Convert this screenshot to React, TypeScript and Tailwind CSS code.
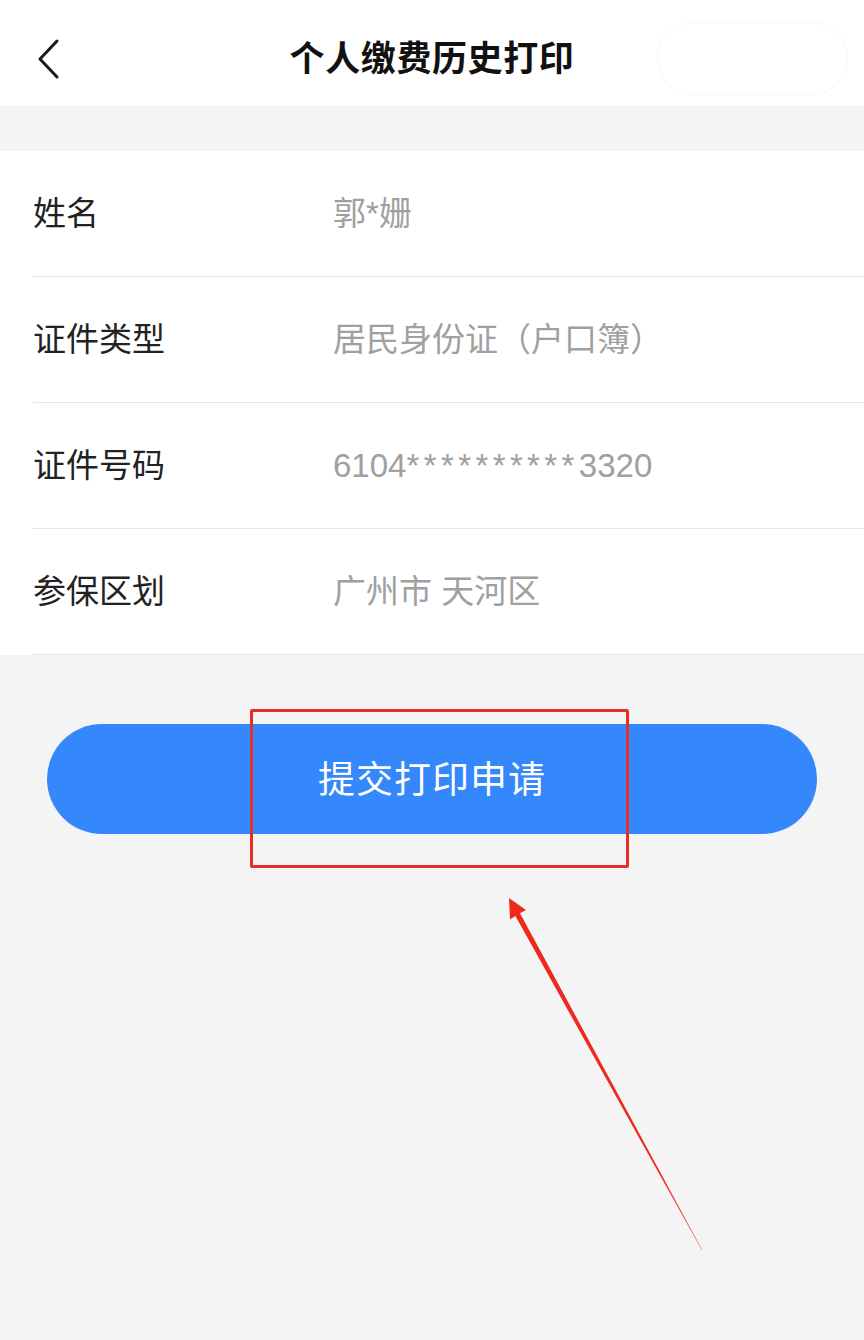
import React from "react";

const font = { fontFamily: '"Liberation Sans","Noto Sans CJK SC",sans-serif' };

function Row({ label, value }: { label: string; value: React.ReactNode }) {
  return (
    <div className="ml-[33px] h-[126px] flex items-center border-b border-[#e6e6e6]">
      <div className="w-[300px] text-[33px] text-[#222] leading-none">{label}</div>
      <div className="text-[33px] text-[#a0a0a0] leading-none">{value}</div>
    </div>
  );
}

export default function App() {
  return (
    <div
      className="relative w-[864px] min-h-[1340px] bg-[#f4f4f4] overflow-hidden"
      style={font}
    >
      {/* Header */}
      <div className="relative h-[106px] bg-white flex items-center justify-center">
        <svg
          className="absolute left-[34px] top-[38px]"
          width="28"
          height="42"
          viewBox="0 0 28 42"
          fill="none"
        >
          <path d="M23 3 L6 21 L23 39" stroke="#1a1a1a" strokeWidth="3" strokeLinecap="round" strokeLinejoin="round" />
        </svg>
        <div className="pt-[10px] text-[35px] font-bold text-[#111] tracking-[0.6px] leading-none">个人缴费历史打印</div>
        <div className="absolute right-[16px] top-[22px] w-[191px] h-[73px] rounded-full bg-white border border-[#f7f7f7]" />
      </div>

      {/* Spacer */}
      <div className="h-[45px]" />

      {/* Info list */}
      <div className="bg-white">
        <Row label="姓名" value="郭*姗" />
        <Row label="证件类型" value="居民身份证（户口簿）" />
        <Row
          label="证件号码"
          value={
            <span>
              6104<span className="tracking-[4.4px]">**********</span>3320
            </span>
          }
        />
        <Row label="参保区划" value="广州市 天河区" />
      </div>

      {/* Button */}
      <div className="px-[47px] pt-[69px]">
        <div className="h-[110px] rounded-full bg-[#3587fc] flex items-center justify-center">
          <span className="pt-[3px] text-[37px] text-white leading-none tracking-[1px]">提交打印申请</span>
        </div>
      </div>

      {/* Annotation box */}
      <div className="absolute left-[250px] top-[709px] w-[379px] h-[159px] border-[3px] border-[#e3302a] rounded-[2px]" />

      {/* Annotation arrow */}
      <svg className="absolute left-0 top-0 pointer-events-none" width="864" height="1340" viewBox="0 0 864 1340">
        <defs>
          <linearGradient id="arrowGrad" x1="509" y1="899" x2="702" y2="1250" gradientUnits="userSpaceOnUse">
            <stop offset="0" stopColor="#ee2a1e" />
            <stop offset="0.8" stopColor="#ee2a1e" />
            <stop offset="1" stopColor="#d8826a" />
          </linearGradient>
        </defs>
        <polygon
          points="509,898 526,910 520,913.2 702.3,1249.9 701.7,1250.1 515.4,916 510,919.5"
          fill="url(#arrowGrad)"
        />
      </svg>
    </div>
  );
}
